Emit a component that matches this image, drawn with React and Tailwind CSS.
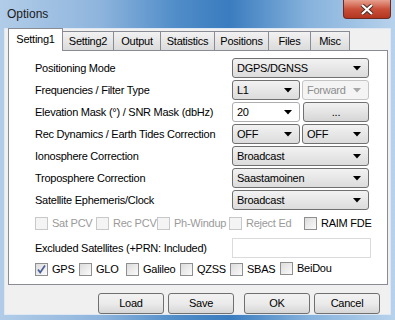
import React from 'react';

const FONT = { fontFamily: '"Liberation Sans", Arial, sans-serif' };

function Arrow({ disabled }) {
  return (
    <svg width="8" height="5" viewBox="0 0 8 5" className="shrink-0">
      <path d="M0 0 H8 L4 4.5 Z" fill={disabled ? '#a8a8a8' : '#000'} />
    </svg>
  );
}

function Combo({ value, width = 'w-[137px]', disabled, editable }) {
  let cls = 'border-[#707070] bg-gradient-to-b from-[#f2f2f2] to-[#dcdcdc] text-black';
  if (disabled) cls = 'border-[#c4c4c4] bg-[#f4f4f4] text-[#8d8d8d]';
  if (editable) cls = 'border-[#abadb3] bg-white text-black';
  return (
    <div className={`${width} h-[20px] flex items-center justify-between pl-[4px] pr-[7px] border rounded-[3px] ${cls}`}>
      <span>{value}</span>
      <Arrow disabled={disabled} />
    </div>
  );
}

function Check({ label, checked, disabled, width, raise }) {
  return (
    <div className={`flex items-center gap-[4px] shrink-0 whitespace-nowrap ${width} ${raise ? '-mt-[2px]' : ''}`}>
      <div
        className={`w-[13px] h-[13px] shrink-0 border flex items-center justify-center ${
          disabled ? 'border-[#c8c8c8] bg-[#f4f4f4]' : 'border-[#8e8f8f] bg-gradient-to-br from-[#dcdcdc] to-[#fbfbfb]'
        }`}
      >
        {checked && (
          <svg width="11" height="11" viewBox="0 0 11 11">
            <path d="M2 5.5 L4.2 8.5 L9 1.5" stroke="#4a5f97" strokeWidth="1.7" fill="none" />
          </svg>
        )}
      </div>
      <span className={disabled ? 'text-[#9a9a9a]' : 'text-black'}>{label}</span>
    </div>
  );
}

function Row({ label, children }) {
  return (
    <div className="flex items-center h-[20px]">
      <span className="w-[197px] shrink-0">{label}</span>
      {children}
    </div>
  );
}

function Button({ label, width = 'w-[66px]' }) {
  return (
    <div className={`${width} h-[21px] flex items-center justify-center border border-[#707070] rounded-[3px] bg-gradient-to-b from-[#f2f2f2] via-[#ebebeb] to-[#d6d6d6]`}>
      {label}
    </div>
  );
}

const tabs = [
  ['Setting1', 'w-[55px]'],
  ['Setting2', 'w-[51px]'],
  ['Output', 'w-[47px]'],
  ['Statistics', 'w-[54px]'],
  ['Positions', 'w-[54px]'],
  ['Files', 'w-[42px]'],
  ['Misc', 'w-[39px]'],
];

export default function App() {
  return (
    <div
      className="w-[395px] h-[320px] relative overflow-hidden whitespace-nowrap text-[11px] tracking-[-0.25px] text-black bg-[linear-gradient(90deg,#b1cce8_0%,#8fb5dd_25%,#4f8cc8_45%,#3a7cbf_58%,#86b2dc_78%,#b7d2ec_100%)]"
      style={FONT}
    >
      {/* title bar */}
      <div className="h-[28px] flex items-center pl-[7px] pb-[1px] text-[12px] tracking-normal text-[#1a1a1a]">Options</div>
      <div className="absolute top-0 left-[343px] w-[48px] h-[19px] rounded-b-[4px] border border-t-0 border-[#6d2a21] bg-gradient-to-b from-[#e6a08f] via-[#c9503a] to-[#b3351f] flex items-center justify-center">
        <svg width="14" height="11" viewBox="0 0 14 11">
          <path d="M2 1 L12 10 M12 1 L2 10" stroke="#4a2a26" strokeWidth="4" />
          <path d="M2 1 L12 10 M12 1 L2 10" stroke="#fff" strokeWidth="2.2" />
        </svg>
      </div>

      {/* client area */}
      <div className="mx-[4px] h-[287px] bg-[#f0f0f0] border border-[#dfe8f2] px-[3px] flex flex-col">
        {/* tabs */}
        <div className="flex items-end h-[22px] -mb-[1px] relative z-10">
          {tabs.map(([t, w], i) =>
            i === 0 ? (
              <div key={t} className={`${w} h-[23px] bg-white border border-b-0 border-[#898c95] flex items-center justify-center pb-[2px]`}>
                {t}
              </div>
            ) : (
              <div key={t} className={`${w} h-[20px] border border-l-0 border-[#898c95] bg-gradient-to-b from-[#f2f2f2] to-[#dbdbdb] flex items-center justify-center`}>
                {t}
              </div>
            )
          )}
        </div>
        {/* panel */}
        <div className="w-[380px] h-[235px] bg-white border border-[#898c95] pl-[26px] pt-[7px] flex flex-col gap-[2px]">
          <Row label="Positioning Mode"><Combo value="DGPS/DGNSS" /></Row>
          <Row label="Frequencies / Filter Type">
            <div className="flex gap-[2px]">
              <Combo value="L1" width="w-[68px]" />
              <Combo value="Forward" width="w-[67px]" disabled />
            </div>
          </Row>
          <Row label="Elevation Mask (°) / SNR Mask (dbHz)">
            <div className="flex gap-[3px]">
              <Combo value="20" width="w-[68px]" editable />
              <div className="w-[66px] h-[20px] flex items-center justify-center border border-[#707070] rounded-[3px] bg-gradient-to-b from-[#f2f2f2] to-[#d6d6d6]">...</div>
            </div>
          </Row>
          <Row label="Rec Dynamics / Earth Tides Correction">
            <div className="flex gap-[2px]">
              <Combo value="OFF" width="w-[68px]" />
              <Combo value="OFF" width="w-[67px]" />
            </div>
          </Row>
          <Row label="Ionosphere Correction"><Combo value="Broadcast" /></Row>
          <Row label="Troposphere Correction"><Combo value="Saastamoinen" /></Row>
          <Row label="Satellite Ephemeris/Clock"><Combo value="Broadcast" /></Row>

          <div className="flex items-center h-[13px] mt-[5px]">
            <Check label="Sat PCV" disabled width="w-[61px]" />
            <Check label="Rec PCV" disabled width="w-[61px]" />
            <Check label="Ph-Windup" disabled width="w-[72px]" />
            <Check label="Reject Ed" disabled width="w-[75px]" />
            <Check label="RAIM FDE" width="w-[70px]" />
          </div>

          <div className="flex items-center h-[20px] mt-[6px]">
            <span className="w-[197px] shrink-0">Excluded Satellites (+PRN: Included)</span>
            <div className="w-[139px] h-[20px] border border-[#d9dbde] bg-white" />
          </div>

          <div className="flex items-center h-[13px] mt-[3px]">
            <Check label="GPS" checked width="w-[44px]" />
            <Check label="GLO" width="w-[47px]" />
            <Check label="Galileo" width="w-[54px]" />
            <Check label="QZSS" width="w-[50px]" />
            <Check label="SBAS" width="w-[50px]" />
            <Check label="BeiDou" width="w-[50px]" raise />
          </div>
        </div>

        {/* buttons */}
        <div className="flex mt-[8px] pl-[90px]">
          <Button label="Load" />
          <div className="w-[4px]" />
          <Button label="Save" />
          <div className="w-[10px]" />
          <Button label="OK" />
          <div className="w-[4px]" />
          <Button label="Cancel" />
        </div>
      </div>
    </div>
  );
}
